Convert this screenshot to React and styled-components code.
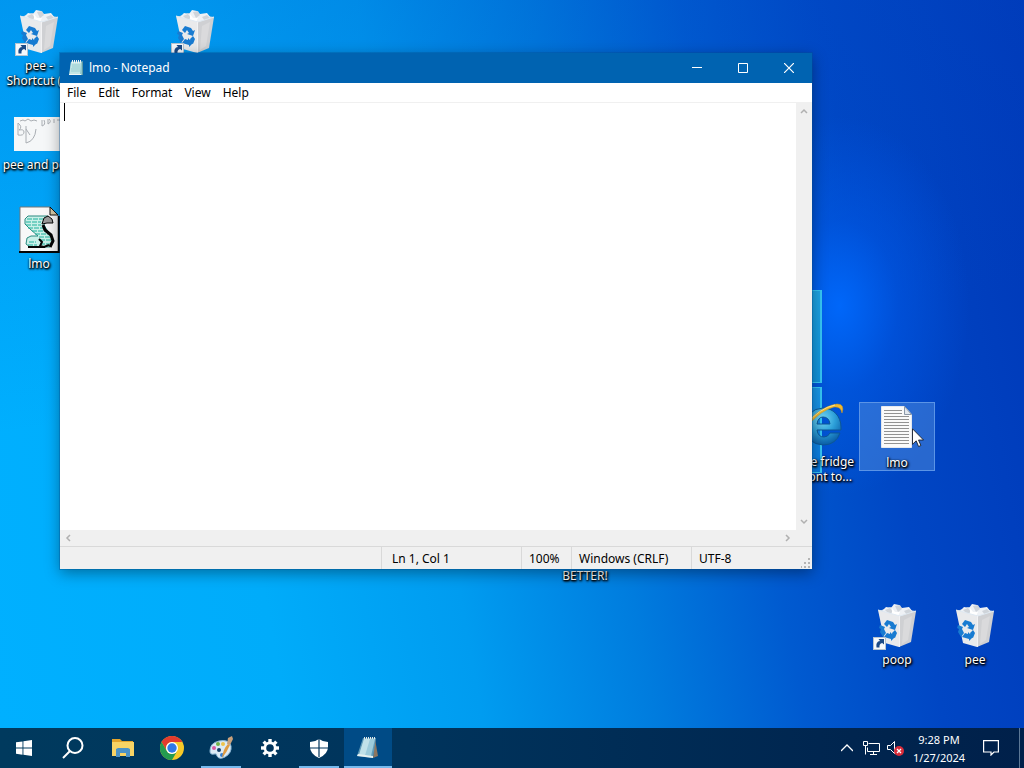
import React from "react";
import styled, { createGlobalStyle, css } from "styled-components";

const GlobalStyle = createGlobalStyle`
  *, *::before, *::after { box-sizing: border-box; }
  body {
    margin: 0;
    font-family: "Noto Sans", "Open Sans", sans-serif;
    font-size: 12px;
    line-height: 15px;
    color: #000;
  }
  button, textarea { font: inherit; color: inherit; }
`;

const Screen = styled.div`
  min-height: 100vh;
  display: flex;
  flex-direction: column;
  overflow: hidden;
`;

const Desktop = styled.main`
  position: relative;
  flex: 1;
  overflow: hidden;
  background:
    radial-gradient(ellipse 130px 190px at 82% 42%, rgba(0, 106, 255, 0.9), rgba(0, 96, 245, 0.4) 45%, rgba(0, 80, 230, 0) 100%),
    linear-gradient(172deg, rgba(0, 80, 200, 0.25), rgba(0, 80, 200, 0) 50%),
    linear-gradient(80deg, #00b0ff 0%, #00acfa 25%, #009cf0 42%, #007cde 57%, #005ad0 70%, #0046c4 82%, #0038b8 100%);
`;

const Panes = styled.div`
  position: absolute;
  left: 740px;
  top: 290px;
  width: 82px;
  display: grid;
  grid-template-rows: 93px 86px;
  gap: 4px;
`;

const Pane = styled.div`
  border: 1px solid #35c6f5;
  border-right-width: 2px;
  background: ${(p) => (p.$fade ? "linear-gradient(#1a98e8, #0878e0)" : "linear-gradient(#1fa4e4, #1093dc)")};
`;

const Shortcut = styled.button`
  position: absolute;
  left: ${(p) => p.$x}px;
  top: ${(p) => p.$y}px;
  width: 76px;
  min-height: 68px;
  padding: 2px 0 0;
  border: 1px solid ${(p) => (p.$selected ? "#5b94e6" : "transparent")};
  background: ${(p) => (p.$selected ? "rgba(80, 140, 220, 0.5)" : "none")};
  display: flex;
  flex-direction: column;
  align-items: center;
  gap: 2px;
`;

const Picture = styled.span`
  display: block;
  width: 48px;
  height: 48px;
  svg { display: block; overflow: visible; }
`;

const Caption = styled.span`
  color: #fff;
  white-space: pre;
  text-align: center;
  text-shadow: 0 1px 2px #000, 1px 1px 2px #000, 1px 1px 3px #000;
`;

const Pointer = styled.svg`
  position: absolute;
  left: 912px;
  top: 428px;
`;

const Window = styled.section`
  position: absolute;
  left: 60px;
  top: 53px;
  width: 752px;
  height: 516px;
  display: flex;
  flex-direction: column;
  background: #fff;
  box-shadow: 0 0 0 1px rgba(0, 80, 150, 0.35), 0 4px 14px rgba(0, 0, 0, 0.38);
`;

const TitleBar = styled.header`
  height: 30px;
  display: flex;
  align-items: center;
  background: #0063b1;
  color: #fff;
  padding-left: 8px;
  gap: 5px;
`;

const Title = styled.h1`
  flex: 1;
  margin: 0;
  font-size: 12px;
  line-height: 14px;
  font-weight: 400;
`;

const WindowButtons = styled.div`
  display: flex;
`;

const WindowButton = styled.button`
  width: 46px;
  height: 30px;
  padding: 0;
  border: 0;
  background: none;
  display: grid;
  place-items: center;
`;

const MenuBar = styled.nav`
  height: 19px;
  padding-left: 1px;
  display: flex;
  align-items: center;
`;

const MenuItem = styled.button`
  border: 0;
  padding: 0 6px;
  background: none;
`;

const Editor = styled.div`
  flex: 1;
  display: grid;
  grid-template-columns: 1fr 16px;
  grid-template-rows: 1fr 16px;
  border-top: 1px solid #f0f0f0;
  background: #f0f0f0;
`;

const TextPane = styled.div`
  position: relative;
  display: grid;
`;

const TextField = styled.textarea`
  border: 0;
  outline: 0;
  padding: 0 4px;
  resize: none;
  background: #fff;
`;

const Caret = styled.i`
  position: absolute;
  left: 4px;
  top: 0;
  width: 1px;
  height: 18px;
  background: #000;
`;

const ScrollTrack = styled.div`
  display: flex;
  justify-content: space-between;
  flex-direction: ${(p) => (p.$vertical ? "column" : "row")};
`;

const ScrollButton = styled.button`
  width: 16px;
  height: 16px;
  padding: 0;
  border: 0;
  background: none;
  display: grid;
  place-items: center;
  color: #b0b0b0;
`;

const StatusBar = styled.footer`
  height: 23px;
  display: grid;
  grid-template-columns: 1fr 140px 50px 120px 121px;
  border-top: 1px solid #d9d9d9;
  background: #f0f0f0;
  position: relative;
`;

const StatusCell = styled.div`
  padding: 4px ${(p) => (p.$wide ? 10 : 7)}px 0;
  white-space: nowrap;
  & + & { border-left: 1px solid #d9d9d9; }
`;

const Grip = styled.svg`
  position: absolute;
  right: 1px;
  bottom: 1px;
`;

const Taskbar = styled.footer`
  height: 40px;
  display: flex;
  justify-content: space-between;
  background: linear-gradient(90deg, #003a5e, #00345c 40%, #002650 80%, #00204a);
  color: #fff;
`;

const Apps = styled.nav`
  display: flex;
  gap: 1px;
  padding-left: 1px;
`;

const barButton = css`
  border: 0;
  padding: 0;
  background: none;
  display: grid;
  place-items: center;
`;

const TaskButton = styled.button`
  ${barButton}
  width: 48px;
  height: 40px;
  position: relative;
  background: ${(p) => (p.$active ? "#004b86" : "none")};
  &::after {
    content: "";
    display: ${(p) => (p.$open || p.$active ? "block" : "none")};
    position: absolute;
    bottom: 0;
    left: ${(p) => (p.$active ? 0 : 4)}px;
    right: ${(p) => (p.$active ? 0 : 4)}px;
    height: 2px;
    background: #76b9ed;
  }
`;

const Tray = styled.div`
  display: flex;
  align-items: stretch;
`;

const TrayButton = styled.button`
  ${barButton}
  width: 24px;
`;

const ActionCenter = styled(TrayButton)`
  width: 40px;
  margin-right: 8px;
`;

const Clock = styled.button`
  ${barButton}
  width: 64px;
  align-content: center;
  gap: 3px;
  font-size: 11px;
  white-space: nowrap;
`;

const ShowDesktop = styled.button`
  width: 5px;
  padding: 0;
  border: 0;
  border-left: 1px solid #5c7896;
  background: none;
`;

const ShortcutArrow = () => (
  <g>
    <rect x=".5" y="35.5" width="12" height="12" fill="#f6f9fc" stroke="#b7c4d0" />
    <path d="M3.5 45.5q-1-6 3.5-6.5l-1.5-2h5.500v5.500l-1.800-1.500q-3.200.5-2.700 4.500z" fill="#1c4b87" />
  </g>
);

const Bin = ({ linked }) => (
  <svg width="48" height="48" viewBox="0 0 48 48" aria-hidden="true">
    <path d="M6 9 17 5 43 9 41 13 27 16z" fill="#b9cddf" />
    <path d="M9 9l4-4 5 1 3-4 5 1 3 3 7-1 4 5-2 4-11 2-10-3z" fill="#eef1f5" />
    <path d="M12 8l5-2 3 4-4 2zM22 4l5-1 2 4-4 3zM31 9l5-2 3 3-5 3z" fill="#cfd4da" />
    <path d="M19 6l3 4h5l-2 4-6-1z" fill="#fff" />
    <path d="M5 8l22 6-1 31-14-4z" fill="#e9eaec" />
    <path d="M27 14l16-5-5 31-12 5z" fill="#cfd0d3" />
    <path d="M31 18l8-4-4 24-6 4z" fill="#dadadc" />
    <path d="M5 8l22 6 16-5" fill="none" stroke="#dfe9f2" />
    <path d="M26.5 14v31" stroke="#f2f2f4" />
    <g fill="#187bd1">
      <path d="M11 22l3-4 6 2 2 3 2-1-2 6-6-2 2-1-2-3-2 3z" />
      <path d="M7 23l5 2-1 2 2 4-3 4-3-5 1-3-2-1z" />
      <path d="M11 35l3-4 3 1v-2l5 5-4 4v-2zM19 31l3-3 2 3-2 5-2-1z" />
    </g>
    {linked && <ShortcutArrow />}
  </svg>
);

const SketchFile = () => (
  <svg width="48" height="48" viewBox="0 0 48 48" aria-hidden="true">
    <rect x="0" y="10" width="48" height="34" fill="#f5f7f8" />
    <g fill="none" stroke="#a9aeb3">
      <path d="M6 14l3-1 2 1 3-2 3 2 3-1 3 1M28 13v6q4-1 2-6M34 12v5q4-2 1-5M40 12v4M43 13h4" />
      <path d="M4 16v12q6 1 6-3 0-3-5-2 4-3-1-7M12 19v17q9-2 10-14M12 22l4 6" />
    </g>
  </svg>
);

const ScriptFile = () => (
  <svg width="48" height="48" viewBox="0 0 48 48" aria-hidden="true">
    <path d="M5 1h30l8 8v37H5z" fill="#f8f8f8" stroke="#777" />
    <path d="M35 1v8h8z" fill="#d5c9a6" stroke="#111" />
    <path d="M4 46h40V10" fill="none" stroke="#050505" strokeWidth="2" />
    <path d="M13 10h20l-3 4-1 5 3 5 5 6 1 6-3 5H15l-4-3 1-6 4-2h7l-8-7-5-5v-5z" fill="#c9f0e8" stroke="#2a8a80" />
    <path d="M12 13h16M11 16h15M11 19h15M13 22h15M17 25h13M20 28h13M24 31h11M25 34h11M14 36h7M13 39h9M25 38h10" stroke="#1fb09c" strokeDasharray="5 1" />
    <path d="M27 18l2-6 4-2 4 3 1 4h-6z" fill="#9b9b9b" stroke="#050505" />
    <path d="M28 19l2 5 6 5 2 6-3 6" fill="none" stroke="#050505" strokeWidth="3" />
    <path d="M24 33l3 3-2 4 4 1 5-2M13 41h17" fill="none" stroke="#050505" strokeWidth="2" />
  </svg>
);

const TextFile = () => (
  <svg width="48" height="48" viewBox="0 0 48 48" aria-hidden="true">
    <path d="M8.5 1.5h23l7 8v33h-30z" fill="#fafafa" stroke="#e4e8ee" />
    <path d="M31.5 1.5v8h7z" fill="#e3e8ee" stroke="#8b98a8" />
    <path d="M11 5.500h18M11 8.500h18M11 11.500h25M11 14.500h25M11 17.500h25M11 20.500h25M11 23.500h25M11 26.500h25M11 29.500h25M11 32.500h25M11 35.500h25M11 38.500h25" stroke="#929292" />
  </svg>
);

const Explorer = () => (
  <svg width="48" height="48" viewBox="0 0 48 48" aria-hidden="true">
    <defs>
      <radialGradient id="ie" cx="45%" cy="30%" r="70%">
        <stop stopColor="#7adcf7" />
        <stop offset="55%" stopColor="#2c9fd8" />
        <stop offset="100%" stopColor="#0b5fa8" />
      </radialGradient>
    </defs>
    <path
      fillRule="evenodd"
      d="M28 4C38 4 46 12 46 23v3H22q1 7 7 7 4 0 6-4h10Q41 41 28 41 11 40 11 23 11 5 28 4zM22 20h13q-1-7-7-7-5 0-6 7z"
      fill="url(#ie)"
      stroke="#0d5796"
    />
    <path d="M5 40Q-1 31 14 16 30 1 42 0q8 0 5 9-1-7-8-6Q27 6 15 19 4 31 5 40z" fill="#f2b92f" stroke="#d99b17" strokeWidth=".5" />
    <path d="M10 22Q24 4 40 1" fill="none" stroke="#fbe18b" />
  </svg>
);

const NotepadSmall = () => (
  <svg width="16" height="16" viewBox="0 0 16 16" aria-hidden="true">
    <path d="M3 1.500h12V15H1z" fill="#8fc7cc" />
    <path d="M3 2h10l-1 12H1.500z" fill="#c4e6e6" />
    <path d="M4 5h8M4 7h8M3 9h9M3 11h9" stroke="#98cfd2" />
    <path d="M1 14.500h12" stroke="#f0f6f5" />
    <path d="M4.500 0v3M6.500 0v3M8.500 0v3M10.500 0v3M12.500 0v3" stroke="#eef3f3" />
    <path d="M14.500 2v13" stroke="#5d99a4" />
  </svg>
);

const NotepadLarge = () => (
  <svg width="24" height="24" viewBox="0 0 24 24" aria-hidden="true">
    <path d="M19 3l3 17-5 2z" fill="#8d7660" />
    <path d="M7 2h13l-3 20L1 20z" fill="#5f9ab8" />
    <path d="M8 3h11l-4 17L3 19z" fill="#9ccbdb" />
    <path d="M8 3h6L9 19.500 3 19z" fill="#c9e6ec" opacity=".8" />
    <path d="M1 20l16 2v-2L2 18z" fill="#e8f2f1" />
    <path d="M8 2h12" stroke="#dfe9ea" strokeDasharray="1 1" strokeWidth="2" />
  </svg>
);

const Chevron = ({ turn = 0 }) => (
  <svg width="8" height="8" viewBox="0 0 8 8" aria-hidden="true">
    <path d="M1 6l3-3 3 3" transform={`rotate(${turn} 4 4)`} fill="none" stroke="currentColor" strokeWidth="1.5" />
  </svg>
);

const shortcuts = [
  { x: 1, y: 5, label: "pee -\nShortcut (2)", art: <Bin linked /> },
  { x: 157, y: 5, label: "poop", art: <Bin linked /> },
  { x: 0, y: 104, label: "pee and poo", art: <SketchFile /> },
  { x: 1, y: 203, label: "lmo", art: <ScriptFile /> },
  { x: 781, y: 401, label: "to the fridge\nin front to...", art: <Explorer /> },
  { x: 547, y: 515, label: "BETTER!", art: <TextFile /> },
  { x: 859, y: 599, label: "poop", art: <Bin linked /> },
  { x: 937, y: 599, label: "pee", art: <Bin /> },
];

export default function App() {
  return (
    <Screen>
      <GlobalStyle />
      <Desktop>
        <Panes><Pane /><Pane $fade /></Panes>
        {shortcuts.map((s) => (
          <Shortcut key={`${s.x}-${s.y}`} $x={s.x} $y={s.y}>
            <Picture>{s.art}</Picture>
            <Caption>{s.label}</Caption>
          </Shortcut>
        ))}
        <Shortcut $x={859} $y={402} $selected>
          <Picture><TextFile /></Picture>
          <Caption>lmo</Caption>
        </Shortcut>
        <Window aria-label="lmo - Notepad">
          <TitleBar>
            <NotepadSmall />
            <Title>lmo - Notepad</Title>
            <WindowButtons>
              <WindowButton aria-label="Minimize"><svg width="10" height="10"><path d="M0 4.500h10" stroke="#fff" /></svg></WindowButton>
              <WindowButton aria-label="Maximize"><svg width="10" height="10"><path d="M.5.5h9v9h-9z" fill="none" stroke="#fff" /></svg></WindowButton>
              <WindowButton aria-label="Close"><svg width="10" height="10"><path d="M0 0l10 10M10 0L0 10" stroke="#fff" strokeWidth="1.2" /></svg></WindowButton>
            </WindowButtons>
          </TitleBar>
          <MenuBar>
            {["File", "Edit", "Format", "View", "Help"].map((m) => <MenuItem key={m}>{m}</MenuItem>)}
          </MenuBar>
          <Editor>
            <TextPane><TextField aria-label="Document text" /><Caret /></TextPane>
            <ScrollTrack $vertical>
              <ScrollButton aria-label="Scroll up"><Chevron /></ScrollButton>
              <ScrollButton aria-label="Scroll down"><Chevron turn={180} /></ScrollButton>
            </ScrollTrack>
            <ScrollTrack>
              <ScrollButton aria-label="Scroll left"><Chevron turn={-90} /></ScrollButton>
              <ScrollButton aria-label="Scroll right"><Chevron turn={90} /></ScrollButton>
            </ScrollTrack>
          </Editor>
          <StatusBar>
            <StatusCell />
            <StatusCell $wide>Ln 1, Col 1</StatusCell>
            <StatusCell>100%</StatusCell>
            <StatusCell>Windows (CRLF)</StatusCell>
            <StatusCell>UTF-8</StatusCell>
            <Grip width="10" height="10" aria-hidden="true"><path d="M7 0h2v2H7zM7 4h2v2H7zM7 8h2v2H7zM3 4h2v2H3zM3 8h2v2H3zM0 8h1v2H0z" fill="#b5b5b5" /></Grip>
          </StatusBar>
        </Window>
        <Pointer width="12" height="20" viewBox="0 0 12 20" aria-hidden="true">
          <path d="M.5.8v15.500l3.700-3.500 2.400 5.700 2.300-1-2.400-5.500h5z" fill="#fff" stroke="#111" strokeWidth=".8" />
        </Pointer>
      </Desktop>
      <Taskbar>
        <Apps aria-label="Taskbar">
          <TaskButton aria-label="Start">
            <svg width="18" height="16" viewBox="0 0 18 16"><path d="M0 2.300 6.500 1.400v6.200H0zM7.400 1.200 16 0v7.600H7.400zM0 8.500h6.500v6.200L0 13.800zM7.400 8.500H16V16l-8.600-1.200z" fill="#fff" /></svg>
          </TaskButton>
          <TaskButton aria-label="Search">
            <svg width="26" height="22" viewBox="0 0 26 22" fill="none" stroke="#fff" strokeWidth="2"><circle cx="14" cy="8.5" r="7.5" /><path d="M9 14l-7 7" /></svg>
          </TaskButton>
          <TaskButton aria-label="File Explorer">
            <svg width="22" height="20" viewBox="0 0 22 20"><path d="M0 1h8l2 2h11v4H0z" fill="#e4a52c" /><path d="M0 4h22v14H0z" fill="#f8d465" /><path d="M4 19v-8l2-1h10l2 1v8h-4v-4H8v4z" fill="#4b93c8" /></svg>
          </TaskButton>
          <TaskButton aria-label="Chrome">
            <svg width="24" height="24" viewBox="0 0 24 24"><circle cx="12" cy="12" r="12" fill="#f7c928" /><path d="M1.600 6A12 12 0 0 1 22.400 6H12a6 6 0 0 0-5.200 9z" fill="#e33b2e" /><path d="M1.600 6A12 12 0 0 0 12 24l5.200-9A6 6 0 0 1 6.800 15z" fill="#249b50" /><circle cx="12" cy="12" r="6" fill="#fff" /><circle cx="12" cy="12" r="4.7" fill="#3079e7" /></svg>
          </TaskButton>
          <TaskButton $open aria-label="Paint">
            <svg width="24" height="24" viewBox="0 0 24 24"><path d="M1 15Q1 7 10 5q10-2 12 5 1 7-6 11-6 3-8-1 0-3-3-2-4 1-4-3z" fill="#dcebf5" stroke="#8fb9d7" /><circle cx="5" cy="12" r="2" fill="#d85ca3" /><circle cx="9" cy="8" r="2" fill="#72b34a" /><circle cx="14" cy="8" r="2" fill="#edc34c" /><circle cx="10" cy="14" r="2" fill="#133e68" /><circle cx="13" cy="19" r="2" fill="#327ed1" /><path d="M13 22q1-9 6-14l2 1q-3 7-8 13z" fill="#df9b42" /><path d="M18 8l1-6 4-2 1 3-3 6z" fill="#c9a17b" /></svg>
          </TaskButton>
          <TaskButton aria-label="Settings">
            <svg width="20" height="20" viewBox="0 0 20 20">
              <g fill="#fff">
                {[0, 45, 90, 135].map((a) => <path key={a} d="M8.300 1h3.400v18H8.300z" transform={`rotate(${a} 10 10)`} />)}
                <circle cx="10" cy="10" r="6.5" />
              </g>
              <circle cx="10" cy="10" r="3.8" fill="#00345c" />
            </svg>
          </TaskButton>
          <TaskButton $open aria-label="Windows Security">
            <svg width="18" height="20" viewBox="0 0 18 20"><path d="M9 1q4 3 9 3v5q0 7-9 11Q0 16 0 9V4q5 0 9-3z" fill="#fff" /><path d="M9 1v18M0 10h18" stroke="#00345c" strokeWidth="1.2" /></svg>
          </TaskButton>
          <TaskButton $active aria-label="Notepad"><NotepadLarge /></TaskButton>
        </Apps>
        <Tray>
          <TrayButton aria-label="Show hidden icons"><svg width="12" height="8" fill="none" stroke="#fff" strokeWidth="1.3"><path d="M0 7l6-6 6 6" /></svg></TrayButton>
          <TrayButton aria-label="Network"><svg width="17" height="15" fill="none" stroke="#fff"><path d="M5.500 2.500h11v8h-12v-4M10.500 10.500v3M7 13.500h7M.5.5h4v4h-4zM2.500 4.500v9" /></svg></TrayButton>
          <TrayButton aria-label="Volume muted"><svg width="18" height="16"><path d="M1.500 5.500h3l4-4v12l-4-4h-3z" fill="none" stroke="#fff" /><circle cx="13" cy="11" r="5" fill="#d92c3a" /><path d="M11 9l4 4M15 9l-4 4" stroke="#fff" strokeWidth="1.3" /></svg></TrayButton>
          <Clock><span>9:28 PM</span><span>1/27/2024</span></Clock>
          <ActionCenter aria-label="Notifications"><svg width="16" height="16" fill="none" stroke="#fff" strokeWidth="1.2"><path d="M.6.6h14.800v11.400h-4.400l-3 3v-3H.6z" /></svg></ActionCenter>
          <ShowDesktop aria-label="Show desktop" />
        </Tray>
      </Taskbar>
    </Screen>
  );
}
